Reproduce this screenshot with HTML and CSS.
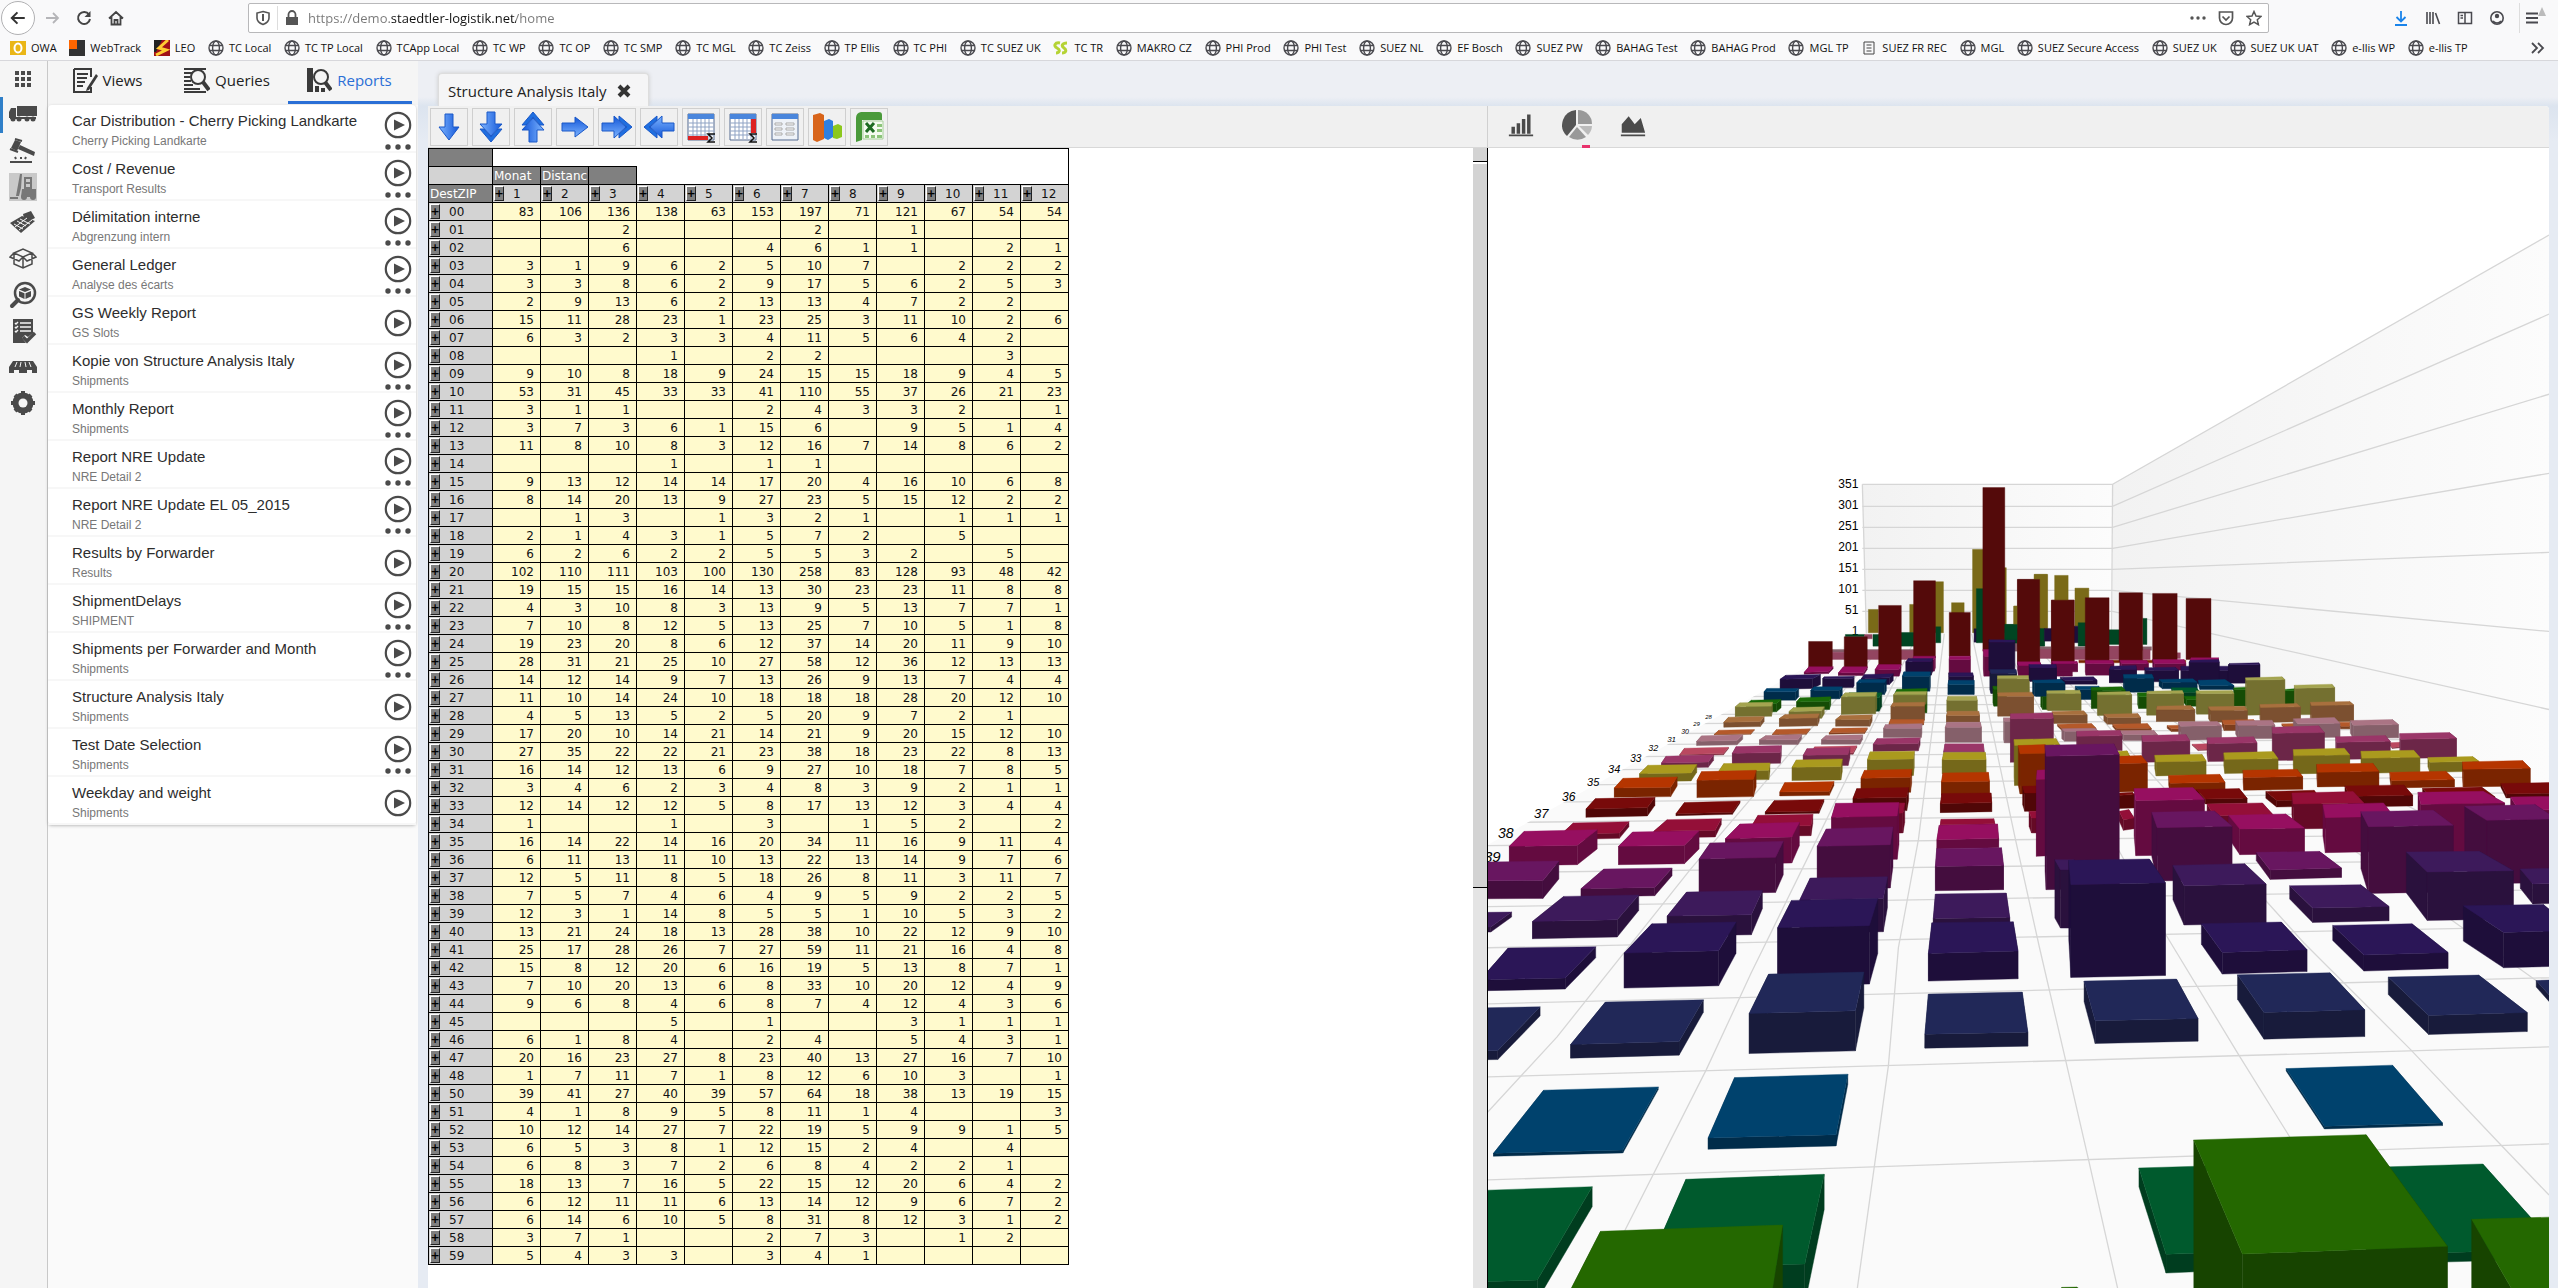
FILE: index.html
```html
<!DOCTYPE html>
<html lang="en">
<head>
<meta charset="utf-8">
<title>Structure Analysis Italy</title>
<link rel="stylesheet" href="styles.css">
</head>
<body>
<svg class="defs" aria-hidden="true">
  <symbol id="globe" viewBox="0 0 16 16"><g fill="none" stroke="#4a4a4f" stroke-width="1.4"><circle cx="8" cy="8" r="7"/><ellipse cx="8" cy="8" rx="3.4" ry="7"/><path d="M1.5 5.5h13M1.5 10.5h13"/></g></symbol>
  <symbol id="play" viewBox="0 0 28 28"><circle cx="14" cy="14" r="12.2" fill="none" stroke="#4a4a4a" stroke-width="2.2"/><path d="M10 8.5 21 14 10 19.500z" fill="#4a4a4a"/></symbol>
  <symbol id="arrow" viewBox="0 0 32 32"><path d="M12 3h8v13h6L16 29 6 16h6z" fill="url(#blue)" stroke="#1a58c8"/></symbol>
  <symbol id="arrow2" viewBox="0 0 32 32"><path d="M12 1h8v12h7L16 25 5 13h7z" fill="url(#blue)" stroke="#1a58c8"/><path d="M5 18h4l7 8 7-8h4L16 31z" fill="#1f6fe0" stroke="#1a58c8"/></symbol>
  <symbol id="grid" viewBox="0 0 32 32"><path d="M3 3h26v26H3z" fill="#fff" stroke="#556a90"/><path d="M3 3h26v5H3z" fill="#4a86dc"/><path d="M3.500 12h25M3.500 16h25M3.500 20h25M3.500 24h25M8 8v20M12 8v20M16 8v20M20 8v20M24 8v20" stroke="#8fa3c4" fill="none"/></symbol>
  <linearGradient id="blue"><stop offset="0" stop-color="#7db4ff"/><stop offset="1" stop-color="#1256d8"/></linearGradient>
</svg>

<header class="browser">
  <div class="navbar">
    <button class="round" aria-label="Back"><svg viewBox="0 0 16 16"><path d="M14 8H2.500M7.500 3 2.500 8l5 5" fill="none" stroke="#333" stroke-width="1.8"/></svg></button>
    <button class="nav" aria-label="Forward"><svg viewBox="0 0 16 16"><path d="M2 8h12M9 3l5 5-5 5" fill="none" stroke="#b5b5b8" stroke-width="1.800"/></svg></button>
    <button class="nav" aria-label="Reload"><svg viewBox="0 0 16 16"><path d="M13 4.500A6 6 0 1 0 14 9" fill="none" stroke="#444" stroke-width="2"/><path d="M14.500 1v6h-6z" fill="#444"/></svg></button>
    <button class="nav" aria-label="Home"><svg viewBox="0 0 16 16"><path d="M1 8.500 8 2l7 6.500M3.500 7v7.500h9V7M6.500 14v-4h3v4" fill="none" stroke="#444" stroke-width="1.800"/></svg></button>
    <div class="urlbar">
      <svg viewBox="0 0 16 16"><path d="M8 1.500 14 3v5c0 3-2 5-6 6.500C4 13 2 11 2 8V3z" fill="none" stroke="#555" stroke-width="1.600"/><path d="M8 4v7" stroke="#555" stroke-width="2"/></svg>
      <span class="rule"></span>
      <svg viewBox="0 0 16 16"><path d="M2 7h12v8H2z" fill="#555"/><path d="M4.500 8V4.500a3.500 3.500 0 0 1 7 0V8" fill="none" stroke="#555" stroke-width="1.800"/></svg>
      <input class="url" type="text" aria-label="Address" value="https://demo.staedtler-logistik.net/home">
      <svg viewBox="0 0 16 16"><g fill="#555"><circle cx="2" cy="8" r="1.700"/><circle cx="8" cy="8" r="1.700"/><circle cx="14" cy="8" r="1.700"/></g></svg>
      <svg viewBox="0 0 16 16"><path d="M1.500 2h13v6a6.500 6.500 0 0 1-13 0zM4.500 6.500 8 10l3.500-3.500" fill="none" stroke="#555" stroke-width="1.700"/></svg>
      <svg viewBox="0 0 16 16"><path d="m8 1.500 2 4.500 5 .5-3.700 3.300 1.100 4.900L8 12.200l-4.400 2.500 1.100-4.900L1 6.500 6 6z" fill="none" stroke="#555" stroke-width="1.500"/></svg>
    </div>
    <div class="tools">
      <button class="nav" aria-label="Downloads"><svg viewBox="0 0 16 16"><path d="M8 1v10M3.500 7 8 11.500 12.500 7M2 15h12" fill="none" stroke="#1a84ea" stroke-width="1.800"/></svg></button>
      <button class="nav" aria-label="Library"><svg viewBox="0 0 16 16"><path d="M2 2v12M5 2v12M8 2v12M10.500 3l4 11" fill="none" stroke="#4a4a4f" stroke-width="1.600"/></svg></button>
      <button class="nav" aria-label="Sidebars"><svg viewBox="0 0 16 16"><path d="M1.500 2.500h13v11h-13zM8 2.500v11M3.500 5.500H6M3.500 8H6" fill="none" stroke="#4a4a4f" stroke-width="1.500"/></svg></button>
      <button class="nav" aria-label="Account"><svg viewBox="0 0 16 16"><circle cx="8" cy="8" r="6.200" fill="none" stroke="#4a4a4f" stroke-width="1.600"/><circle cx="8" cy="6" r="2.200" fill="#4a4a4f"/><path d="M4 11a5 5 0 0 0 8 0" fill="none" stroke="#4a4a4f" stroke-width="1.600"/></svg></button>
      <button class="nav menu" aria-label="Menu"><svg viewBox="0 0 20 16"><path d="M0 3.500h12M0 8h12M0 12.500h12" stroke="#4a4a4f" stroke-width="1.800"/><path d="m16-3 4 9h-8z" fill="#bbb"/></svg></button>
    </div>
  </div>
  <nav class="bookmarks">
    <div class="marks">
      <a href="#"><svg viewBox="0 0 16 16"><path d="M0 1h16v14H0z" fill="#eab616"/><ellipse cx="8" cy="8" rx="3.500" ry="4.500" fill="none" stroke="#fff" stroke-width="2"/></svg>OWA</a>
      <a href="#"><svg viewBox="0 0 16 16"><path d="M0 0h16v16H0z" fill="#333"/><path d="M0 0h8v9H0z" fill="#f60"/></svg>WebTrack</a>
      <a href="#"><svg viewBox="0 0 16 16"><path d="M0 0h16v16H0z" fill="#a01018"/><path d="M0 0h8L2 12H0z" fill="#222"/><path d="M14 0 5 8l7 2-10 5" stroke="#fc3" stroke-width="3" fill="none"/></svg>LEO</a>
      <a href="#"><svg><use href="#globe"/></svg>TC Local</a>
      <a href="#"><svg><use href="#globe"/></svg>TC TP Local</a>
      <a href="#"><svg><use href="#globe"/></svg>TCApp Local</a>
      <a href="#"><svg><use href="#globe"/></svg>TC WP</a>
      <a href="#"><svg><use href="#globe"/></svg>TC OP</a>
      <a href="#"><svg><use href="#globe"/></svg>TC SMP</a>
      <a href="#"><svg><use href="#globe"/></svg>TC MGL</a>
      <a href="#"><svg><use href="#globe"/></svg>TC Zeiss</a>
      <a href="#"><svg><use href="#globe"/></svg>TP Ellis</a>
      <a href="#"><svg><use href="#globe"/></svg>TC PHI</a>
      <a href="#"><svg><use href="#globe"/></svg>TC SUEZ UK</a>
      <a href="#"><svg viewBox="0 0 16 16"><path d="M7 3C2 2 0 6 4 8s2 5-1 5M14 3c-5 0-6 3-3 5s2 5-2 5" fill="none" stroke="#b5d334" stroke-width="3"/></svg>TC TR</a>
      <a href="#"><svg><use href="#globe"/></svg>MAKRO CZ</a>
      <a href="#"><svg><use href="#globe"/></svg>PHI Prod</a>
      <a href="#"><svg><use href="#globe"/></svg>PHI Test</a>
      <a href="#"><svg><use href="#globe"/></svg>SUEZ NL</a>
      <a href="#"><svg><use href="#globe"/></svg>EF Bosch</a>
      <a href="#"><svg><use href="#globe"/></svg>SUEZ PW</a>
      <a href="#"><svg><use href="#globe"/></svg>BAHAG Test</a>
      <a href="#"><svg><use href="#globe"/></svg>BAHAG Prod</a>
      <a href="#"><svg><use href="#globe"/></svg>MGL TP</a>
      <a href="#"><svg viewBox="0 0 16 16"><path d="M3 2h10v12H3zM5.500 5h5M5.500 8h5M5.500 11h5" fill="none" stroke="#444"/></svg>SUEZ FR REC</a>
      <a href="#"><svg><use href="#globe"/></svg>MGL</a>
      <a href="#"><svg><use href="#globe"/></svg>SUEZ Secure Access</a>
      <a href="#"><svg><use href="#globe"/></svg>SUEZ UK</a>
      <a href="#"><svg><use href="#globe"/></svg>SUEZ UK UAT</a>
      <a href="#"><svg><use href="#globe"/></svg>e-llis WP</a>
      <a href="#"><svg><use href="#globe"/></svg>e-llis TP</a>
    </div>
    <button class="nav" aria-label="More bookmarks"><svg viewBox="0 0 16 16"><path d="m2 3 5 5-5 5M8 3l5 5-5 5" fill="none" stroke="#4a4a4f" stroke-width="1.800"/></svg></button>
  </nav>
</header>

<div class="app">
  <nav class="rail">
    <button aria-label="Apps"><svg viewBox="0 0 28 28"><path d="M6 6h4v4H6zm6 0h4v4h-4zm6 0h4v4h-4zM6 12h4v4H6zm6 0h4v4h-4zm6 0h4v4h-4zM6 18h4v4H6zm6 0h4v4h-4zm6 0h4v4h-4z"/></svg></button>
    <button class="current" aria-label="Transport"><svg viewBox="0 0 28 28"><path d="M8 5h20v10H8zM0 11l2-4h5v10H0zM1 16h26v2H1z"/><circle cx="4" cy="18" r="2.500"/><circle cx="10" cy="18" r="2.500"/><circle cx="18" cy="18" r="2.500"/><circle cx="24" cy="18" r="2.500"/></svg></button>
    <button aria-label="Tenders"><svg viewBox="0 0 28 28"><path d="m6 3 6 2-4 9-6-3zM11 8l15 7-1 4L9 12z"/><path d="M6 2l7 2M1 12l8 3M1 25h22M6 20l1 2M12 20v2M17 20l-1 2" stroke="#4a4a4a" stroke-width="2"/></svg></button>
    <button class="faded" aria-label="Warehouse"><svg viewBox="0 0 28 28"><path d="M11 1h2l-1 14-2 8H7zM15 4h8v12h4v8H12l1-8h2z"/><path d="M17 6h4v3h-4zM17 11h4v3h-4z" fill="#c9c9c9"/><circle cx="15" cy="24" r="3"/><circle cx="24" cy="24" r="3"/><path d="M1 25h8" stroke="#777" stroke-width="2"/></svg></button>
    <button aria-label="Costs"><svg viewBox="0 0 28 28"><path d="M14 5 22 2l4 7-10 5z"/><path d="m1 14 12-7 13 5-14 12z"/><path d="m5 15 9 5M8 12l9 5M11 10l10 5M6 18l12-9M10 21l13-10" stroke="#f5f5f5"/></svg></button>
    <button aria-label="Packages"><svg viewBox="0 0 28 28"><path d="m5 8 9-4 9 4-9 4zM5 8v11l9 4 9-4V8M14 12v11M5 8l-4 4 9 4 4-4 4 4 9-4-4-4" fill="none" stroke="#4a4a4a" stroke-width="1.500"/></svg></button>
    <button aria-label="Tracking"><svg viewBox="0 0 28 28"><circle cx="16" cy="12" r="10" fill="none" stroke="#4a4a4a" stroke-width="2.500"/><path d="m16 6 6 2.500-6 2.500-6-2.500zM10 10l5.500 2.300V18L10 15.500zM22 10l-5.500 2.300V18l5.500-2.500z"/><path d="m9 19-6 6" stroke="#4a4a4a" stroke-width="4" stroke-linecap="round"/></svg></button>
    <button aria-label="Checklists"><svg viewBox="0 0 28 28"><path d="M4 2h20v14l-5 4-3-2-3 3 4 5H4z"/><path d="M11 6h11M11 10h11M11 14h11M6 6l1 1 2-2M6 10l1 1 2-2M6 14l1 1 2-2" stroke="#f5f5f5" fill="none" stroke-width="1.500"/><path d="m14 20 4 4 8-8" fill="none" stroke="#4a4a4a" stroke-width="3.500"/></svg></button>
    <button aria-label="Stock"><svg viewBox="0 0 28 28"><path d="M4 8h20l4 6v6h-5v-3h-5v3h-8v-3H5v3H0v-6z"/><path d="m8 9-2 5M12 9l-1 5M16 9l1 5M20 9l2 5" stroke="#f5f5f5"/></svg></button>
    <button aria-label="Settings"><svg viewBox="0 0 28 28"><circle cx="14" cy="14" r="7.500" fill="none" stroke="#4a4a4a" stroke-width="6"/><path d="M14 2v24M2 14h24M6 6l16 16M22 6 6 22" stroke="#4a4a4a" stroke-width="4"/><circle cx="14" cy="14" r="4.500" fill="#f5f5f5"/></svg></button>
  </nav>

  <aside class="panel">
    <div class="tabs">
      <button class="views"><svg viewBox="0 0 26 26"><path d="M2 2h17v8M19 20v5H2V2M5 7h11M5 11h10M5 15h8M5 19h6" fill="none" stroke="#3a3a3a" stroke-width="2"/><path d="M24 7 15 21l-1 3 3-1L26 9z" fill="#3a3a3a"/></svg>Views</button>
      <button class="queries"><svg viewBox="0 0 26 26"><path d="M0 2h22M0 6h8M0 10h6M0 14h7M0 18h9M0 22h16M0 25h22" stroke="#3a3a3a" stroke-width="2"/><circle cx="14" cy="10" r="7" fill="none" stroke="#3a3a3a" stroke-width="2"/><path d="m19 15 6 8" stroke="#3a3a3a" stroke-width="4"/></svg>Queries</button>
      <button class="reports selected"><svg viewBox="0 0 26 26"><path d="M1 1h6v24H1zM9 19h4v6H9zM15 21h4v4h-4z" fill="#3a3a3a"/><circle cx="15" cy="10" r="7" fill="#f5f5f5" stroke="#3a3a3a" stroke-width="2"/><path d="m19 15 6 8" stroke="#3a3a3a" stroke-width="4"/></svg>Reports</button>
    </div>
    <ul class="reports-list" id="reports"></ul>
  </aside>

  <main class="work">
    <div class="doc-tabs"><div class="doc-tab">Structure Analysis Italy<button aria-label="Close tab"><svg viewBox="0 0 14 14"><path d="m2 2 10 10M12 2 2 12" stroke="#333" stroke-width="4"/></svg></button></div></div>
    <div class="split">
      <section class="pivot">
        <div class="toolbar">
          <button aria-label="Expand down"><svg><use href="#arrow"/></svg></button>
          <button aria-label="Expand all down"><svg><use href="#arrow2"/></svg></button>
          <button aria-label="Collapse up"><svg class="up"><use href="#arrow2"/></svg></button>
          <button aria-label="Expand right"><svg class="right"><use href="#arrow"/></svg></button>
          <button aria-label="Expand all right"><svg class="right"><use href="#arrow2"/></svg></button>
          <button aria-label="Collapse left"><svg class="left"><use href="#arrow2"/></svg></button>
          <button aria-label="Column totals"><svg viewBox="0 0 32 32"><use href="#grid"/><path d="M3 25h20v4H3z" fill="#d22"/><path d="M30 23h-7l4 4-4 4h7" fill="none" stroke="#111" stroke-width="1.500"/></svg></button>
          <button aria-label="Row totals"><svg viewBox="0 0 32 32"><use href="#grid"/><path d="M24 8h5v14h-5z" fill="#d22"/><path d="M30 23h-7l4 4-4 4h7" fill="none" stroke="#111" stroke-width="1.500"/></svg></button>
          <button aria-label="Layout"><svg viewBox="0 0 32 32"><path d="M3 3h26v26H3z" fill="#eef2f8" stroke="#556a90"/><path d="M3 3h26v5H3z" fill="#4a86dc"/><path d="M6 12h7v2H6zm11 0h8v2h-8zM6 17h7v2H6zm11 0h8v2h-8zM6 22h7v2H6zm11 0h8v2h-8z" fill="#fff" stroke="#aaa"/></svg></button>
          <button aria-label="Chart"><svg viewBox="0 0 32 32"><path d="m2 4 7-2 4 2v24l-7 3-4-2z" fill="#d8641a"/><path d="m13 10 5-2 4 2v16l-5 3-4-2z" fill="#2f7fe0"/><path d="m22 15 5-2 4 2v11l-5 2-4-1z" fill="#8cc81e"/></svg></button>
          <button aria-label="Export to Excel"><svg viewBox="0 0 32 32"><path d="M8 1h18q3 0 3 3v5H9v20l-6 2V7q0-5 5-6z" fill="#4a9a3a"/><path d="M10 10h20v18H10z" fill="#f4fbf0" stroke="#a8d09c"/><path d="M24 13h5v3h-5zm0 5h5v3h-5zm-12 6h4v3h-4zm6 0h4v3h-4zm6 0h5v3h-5z" fill="#8cc47a"/><path d="m13 12 8 9M21 12l-8 9" stroke="#1d6b22" stroke-width="3"/></svg></button>
        </div>
        <div class="sheet">
          <table id="pivot">
            <thead>
              <tr class="blank"><th class="dark"></th><td colspan="12"></td></tr>
              <tr class="blank"><th></th><th class="dark">Monat</th><th class="dark">Distanc</th><th class="dark"></th><td colspan="9"></td></tr>
            </thead>
            <tbody></tbody>
          </table>
          <div class="scroll"><span class="cap"></span><span class="thumb"></span></div>
        </div>
      </section>
      <section class="graph">
        <div class="toolbar kinds">
          <button aria-label="Bar chart"><svg viewBox="0 0 30 30"><path d="M4 17h4v8H4zm6-4h4v12h-4zm6-5h4v17h-4zm6-5h4v22h-4zM1 26h28v2H1z" fill="#4a4a4a"/></svg></button>
          <button class="picked" aria-label="Pie chart"><svg viewBox="0 0 30 30"><path d="M14 15V0a15 15 0 0 0-9 26z" fill="#555"/><path d="M16 14V0a14 14 0 0 1 14 14z" fill="#999"/><path d="M17 16h13a14 14 0 0 1-4 9z" fill="#bbb"/><path d="m15 17 9 10a15 15 0 0 1-17 0z" fill="#999"/></svg></button>
          <button aria-label="Area chart"><svg viewBox="0 0 30 30"><path d="M2 24V14L10 5l7 9 7-7 5 17zM1 26h28v2H1z" fill="#4a4a4a"/></svg></button>
        </div>
        <svg class="scene" id="scene" viewBox="1488 149 1060 1139" preserveAspectRatio="xMinYMin slice" role="img" aria-label="3D bar chart of shipments"></svg>
      </section>
    </div>
  </main>
</div>
<script src="app.js"></script>
</body>
</html>
```
FILE: styles.css
```css
* { box-sizing: border-box; }
body { margin: 0; height: 100vh; display: flex; flex-direction: column; overflow: hidden; font-family: "Open Sans", sans-serif; color: #222; background: #edeff4; }
button { border: 0; padding: 0; background: none; font: inherit; color: inherit; display: flex; align-items: center; justify-content: center; }
svg { display: block; flex: none; }
.defs { position: absolute; width: 0; height: 0; }

.browser { background: #f9f9fa; border-bottom: 1px solid #d7d7db; height: 61px; flex: none; }
.navbar { display: flex; align-items: center; height: 36px; }
.nav { width: 32px; height: 30px; }
.nav svg { width: 16px; height: 16px; }
.round { width: 34px; height: 34px; margin: 0 1px; border: 1px solid #b1b1b3; border-radius: 50%; background: #fff; flex: none; }
.round svg { width: 18px; height: 18px; }
.urlbar { flex: 1; margin-left: 116px; height: 30px; border: 1px solid #b8b8ba; border-radius: 2px; background: #fff; display: flex; align-items: center; gap: 12px; padding: 0 6px; }
.urlbar svg { width: 16px; height: 16px; }
.rule { width: 1px; height: 24px; background: #ddd; margin: 0 -6px; }
.url { flex: 1; border: 0; outline: 0; padding: 0; height: 26px; margin-left: -4px; font: 13px "Open Sans", sans-serif; color: transparent; background: linear-gradient(90deg, #777 82px, #111 82px, #111 208px, #777 208px); -webkit-background-clip: text; background-clip: text; }
.tools { display: flex; margin-left: 116px; width: 173px; }
.menu { border-left: 1px solid #ddd; margin-left: 6px; }
.menu svg { width: 24px; overflow: visible; }
.bookmarks { display: flex; align-items: center; justify-content: space-between; height: 24px; padding: 0 4px 0 10px; }
.marks { display: flex; justify-content: space-between; flex: 1; margin-right: 54px; font-size: 11px; line-height: 16px; }
.marks a { display: flex; align-items: center; gap: 5px; color: #111; text-decoration: none; white-space: nowrap; }
.marks svg { width: 16px; height: 16px; }

.app { flex: 1; display: flex; min-height: 0; }
.rail { width: 48px; flex: none; background: #f5f5f5; border-right: 1px solid #c8c8c8; }
.rail button { width: 100%; height: 36px; padding-right: 4px; border-left: 3px solid transparent; }
.rail .current { border-color: #2f7fc8; }
.rail svg { width: 28px; height: 28px; fill: #4a4a4a; }
.rail .faded svg { background: #c9c9c9; fill: #777; }

.panel { width: 370px; flex: none; background: #fafafa; }
.tabs { height: 44px; display: grid; grid-template-columns: 120px 120px 124px; background: #f5f5f5; font-size: 15px; }
.tabs button { gap: 5px; height: 43px; padding: 4px 2px 10px 0; }
.tabs .selected { color: #2a6fd6; border-bottom: 3px solid #2a6fd6; padding-bottom: 7px; }
.tabs svg { width: 26px; height: 26px; }
.reports-list { list-style: none; margin: 0 2px 0 0; padding: 0; background: #fff; border-radius: 4px; box-shadow: 0 1px 3px #8888; font-family: "Liberation Sans", Arial, sans-serif; }
.reports-list li { height: 48px; display: flex; justify-content: space-between; padding: 0 4px 0 24px; border-bottom: 2px solid #f7f7f7; }
.reports-list h3 { margin: 7px 0 0; font-size: 15px; line-height: 18px; font-weight: 400; color: #2d2d2d; }
.reports-list p { margin: 3px 0 0; font-size: 12px; line-height: 16px; color: #777; }
.actions { width: 28px; display: flex; flex-direction: column; align-items: center; justify-content: center; gap: 5px; padding-top: 5px; }
.actions .more { padding: 0; height: 7px; }
.actions .more svg { width: 26px; height: 6px; }
.actions .play svg { width: 28px; height: 28px; }

.work { flex: 1; min-width: 0; display: flex; flex-direction: column; padding: 0 9px 0 10px; background: linear-gradient(#edeff4 36px, #dce4ef 45px, #e6ebf3 80px); }
.doc-tabs { height: 45px; padding: 12px 0 0 10px; flex: none; }
.doc-tab { width: 211px; height: 33px; border: 1px solid #ddd; border-bottom: 0; border-radius: 4px 4px 0 0; box-shadow: 0 0 4px #ccc; background: #f5f5f6; display: flex; align-items: center; gap: 10px; padding: 2px 0 0 9px; font-size: 15px; white-space: nowrap; }
.doc-tab svg { width: 14px; height: 14px; }
.split { flex: 1; min-height: 0; display: flex; background: #fff; border-radius: 0 4px 0 0; overflow: hidden; }
.pivot { flex: 1060 1 0; min-width: 0; display: flex; flex-direction: column; }
.graph { flex: 1061 1 0; min-width: 0; display: flex; flex-direction: column; }
.toolbar { height: 42px; flex: none; background: #f0f0f0; display: flex; align-items: center; gap: 4px; padding: 0 2px; border-bottom: 1px solid #d8d8d8; }
.pivot .toolbar { border-right: 1px solid #d0d0d0; }
.toolbar button { width: 38px; height: 38px; border: 1px solid #cfcfcf; }
.toolbar svg { width: 32px; height: 32px; }
.up { transform: rotate(180deg); }
.right { transform: rotate(-90deg); }
.left { transform: rotate(90deg); }
.kinds { padding-left: 14px; gap: 18px; }
.kinds button { border: 0; height: 42px; padding-bottom: 4px; }
.kinds svg { width: 30px; height: 30px; }
.kinds .picked { background: linear-gradient(#e8336d, #e8336d) 24px 39px / 8px 3px no-repeat; }
.kinds button:first-child svg, .kinds button:last-child svg { height: 26px; }

.sheet { flex: 1; min-height: 0; display: flex; justify-content: space-between; align-items: flex-start; overflow: hidden; }
table { border-collapse: collapse; table-layout: fixed; width: 641px; font: 12px/14px "DejaVu Sans", Verdana, sans-serif; color: #111; }
tr { height: 18px; }
th, td { border: 1px solid #000; padding: 0; height: 18px; font-weight: 400; white-space: nowrap; }
td { text-align: right; padding-right: 6px; background: #fffacd; }
th { text-align: left; background: #d3d3d3; width: 48px; }
th:first-child { width: 64px; }
th.dark { background: #808080; color: #fff; padding-left: 1px; }
.blank td { background: #fff; border-top-color: #fff; }
.blank:first-child td { border-top-color: #000; border-bottom: 0; }
.axis { display: flex; align-items: center; gap: 9px; padding-left: 1px; }
.axis button { width: 10px; height: 15px; border: 1px solid; border-color: #fff #222 #222 #fff; background: #808080; color: #000; font-weight: 700; font-size: 11px; line-height: 12px; }
.scroll { align-self: stretch; width: 15px; border-right: 1px solid #000; background: #e4e4e4; display: flex; flex-direction: column; gap: 2px; }
.cap { height: 14px; background: #d3d3d3; border-bottom: 1px solid #000; box-shadow: 0 2px #fff; }
.thumb { flex: 0 0 63.5%; background: #d3d3d3; border-bottom: 1px solid #000; }
.scene { flex: 1; min-height: 0; width: 100%; font-family: "Liberation Sans", Arial, sans-serif; }
```
FILE: app.js
```javascript
const reports = [
  ['Car Distribution - Cherry Picking Landkarte', 'Cherry Picking Landkarte', 1],
  ['Cost / Revenue', 'Transport Results', 1],
  ['Délimitation interne', 'Abgrenzung intern', 1],
  ['General Ledger', 'Analyse des écarts', 1],
  ['GS Weekly Report', 'GS Slots', 0],
  ['Kopie von Structure Analysis Italy', 'Shipments', 1],
  ['Monthly Report', 'Shipments', 1],
  ['Report NRE Update', 'NRE Detail 2', 1],
  ['Report NRE Update EL 05_2015', 'NRE Detail 2', 1],
  ['Results by Forwarder', 'Results', 0],
  ['ShipmentDelays', 'SHIPMENT', 1],
  ['Shipments per Forwarder and Month', 'Shipments', 1],
  ['Structure Analysis Italy', 'Shipments', 0],
  ['Test Date Selection', 'Shipments', 1],
  ['Weekday and weight', 'Shipments', 0]
];
const dots = '<button class="more" aria-label="More"><svg viewBox="0 0 26 6" fill="#4a4a4a"><circle cx="3" cy="3" r="2.700"/><circle cx="13" cy="3" r="2.700"/><circle cx="23" cy="3" r="2.700"/></svg></button>';
document.getElementById('reports').innerHTML = reports.map(([title, source, more]) =>
  `<li><div><h3>${title}</h3><p>${source}</p></div><div class="actions"><button class="play" aria-label="Run ${title}"><svg><use href="#play"/></svg></button>${more ? dots : ''}</div></li>`).join('');

/* zip area, then shipments for months 1 to 12; "-" is an empty cell */
const rows = `00 83 106 136 138 63 153 197 71 121 67 54 54
01 - - 2 - - - 2 - 1 - - -
02 - - 6 - - 4 6 1 1 - 2 1
03 3 1 9 6 2 5 10 7 - 2 2 2
04 3 3 8 6 2 9 17 5 6 2 5 3
05 2 9 13 6 2 13 13 4 7 2 2 -
06 15 11 28 23 1 23 25 3 11 10 2 6
07 6 3 2 3 3 4 11 5 6 4 2 -
08 - - - 1 - 2 2 - - - 3 -
09 9 10 8 18 9 24 15 15 18 9 4 5
10 53 31 45 33 33 41 110 55 37 26 21 23
11 3 1 1 - - 2 4 3 3 2 - 1
12 3 7 3 6 1 15 6 - 9 5 1 4
13 11 8 10 8 3 12 16 7 14 8 6 2
14 - - - 1 - 1 1 - - - - -
15 9 13 12 14 14 17 20 4 16 10 6 8
16 8 14 20 13 9 27 23 5 15 12 2 2
17 - 1 3 - 1 3 2 1 - 1 1 1
18 2 1 4 3 1 5 7 2 - 5 - -
19 6 2 6 2 2 5 5 3 2 - 5 -
20 102 110 111 103 100 130 258 83 128 93 48 42
21 19 15 15 16 14 13 30 23 23 11 8 8
22 4 3 10 8 3 13 9 5 13 7 7 1
23 7 10 8 12 5 13 25 7 10 5 1 8
24 19 23 20 8 6 12 37 14 20 11 9 10
25 28 31 21 25 10 27 58 12 36 12 13 13
26 14 12 14 9 7 13 26 9 13 7 4 4
27 11 10 14 24 10 18 18 18 28 20 12 10
28 4 5 13 5 2 5 20 9 7 2 1 -
29 17 20 10 14 21 14 21 9 20 15 12 10
30 27 35 22 22 21 23 38 18 23 22 8 13
31 16 14 12 13 6 9 27 10 18 7 8 5
32 3 4 6 2 3 4 8 3 9 2 1 1
33 12 14 12 12 5 8 17 13 12 3 4 4
34 1 - - 1 - 3 - 1 5 2 - 2
35 16 14 22 14 16 20 34 11 16 9 11 4
36 6 11 13 11 10 13 22 13 14 9 7 6
37 12 5 11 8 5 18 26 8 11 3 11 7
38 7 5 7 4 6 4 9 5 9 2 2 5
39 12 3 1 14 8 5 5 1 10 5 3 2
40 13 21 24 18 13 28 38 10 22 12 9 10
41 25 17 28 26 7 27 59 11 21 16 4 8
42 15 8 12 20 6 16 19 5 13 8 7 1
43 7 10 20 13 6 8 33 10 20 12 4 9
44 9 6 8 4 6 8 7 4 12 4 3 6
45 - - - 5 - 1 - - 3 1 1 1
46 6 1 8 4 - 2 4 - 5 4 3 1
47 20 16 23 27 8 23 40 13 27 16 7 10
48 1 7 11 7 1 8 12 6 10 3 - 1
50 39 41 27 40 39 57 64 18 38 13 19 15
51 4 1 8 9 5 8 11 1 4 - - 3
52 10 12 14 27 7 22 19 5 9 9 1 5
53 6 5 3 8 1 12 15 2 4 - 4 -
54 6 8 3 7 2 6 8 4 2 2 1 -
55 18 13 7 16 5 22 15 12 20 6 4 2
56 6 12 11 11 6 13 14 12 9 6 7 2
57 6 14 6 10 5 8 31 8 12 3 1 2
58 3 7 1 - - 2 7 3 - 1 2 -
59 5 4 3 3 - 3 4 1 - - - -`;
const axis = label => `<th><div class="axis"><button aria-label="Expand ${label}">+</button>${label}</div></th>`;
const months = Array.from({ length: 12 }, (_, i) => axis(i + 1)).join('');
document.querySelector('#pivot thead').insertAdjacentHTML('beforeend', `<tr><th class="dark">DestZIP</th>${months}</tr>`);
document.querySelector('#pivot tbody').innerHTML = rows.split('\n').map(line => {
  const [zip, ...cells] = line.split(' ');
  return `<tr>${axis(zip)}${cells.map(v => `<td>${v === '-' ? '' : v}</td>`).join('')}</tr>`;
}).join('');

/* 3D chart: each series has a top colour and a shaded side colour */
const tones = {
  G: ['#246800', '#174400'], E: ['#005a2d', '#003d1f'], B: ['#00426d', '#002c4a'], N: ['#212858', '#181b3b'],
  I: ['#2b1657', '#1e0e3a'], P: ['#3d1a5b', '#2a113d'], V: ['#681660', '#440d3e'], M: ['#960f60', '#640b40'],
  C: ['#940f38', '#650a26'], R: ['#780a0a', '#500707'], O: ['#b53500', '#7a2400'], Y: ['#aa9a1e', '#75681a'],
  K: ['#9a3668', '#6c2648'], S: ['#ba4860', '#7d3040'], T: ['#aa7484', '#85606a'], U: ['#b4592a', '#7d3e1e'],
  W: ['#a8703e', '#7c5030'], L: ['#a4a450', '#747030'], F: ['#1a6a08', '#154c05'], D: ['#6b0a10', '#540a0a'],
  Q: ['#7a6a18', '#7a6a18'], H: ['#004522', '#004522'], J: ['#934560', '#934560']
};

/* Blocks are "tone, left, top, right, bottom" for flat bars, or
   "tone, back-left, back-right, front-right, front-left, depth" for boxes.
   Each group has its own origin and units, ordered from far to near. */
const groups = [
{ origin: [1470, 460], unit: [2.613, 3], blocks: `Q 1040 450 1066 520
Q 1148 435 1160 520
Q 1213 367 1236 520
Q 1257 430 1290 470
Q 1312 270 1340 520
Q 1390 325 1400 520
Q 1420 440 1430 520
Q 1473 345 1508 510
H 980 525 1030 532
J 1030 525 1050 538
H 1052 525 1068 560
H 1120 519 1160 560
H 1215 502 1229 550
I 1316 508 1325 548
H 1322 388 1340 550
H 1395 495 1430 560
H 1487 507 1500 560
T 945 570 1160 578
J 945 578 980 600
J 1035 573 1070 600
J 1125 573 1160 600
T 1396 552 1430 575
D 884 546 946 627
D 977 532 1037 625
D 1067 438 1126 617
D 1158 364 1215 595
D 1251 459 1306 590
D 1339 85 1396 575
D 1429 360 1487 615
D 1518 422 1577 615
M 885 622 948 622 936 636 873 638 6
M 975 622 1037 622 1027 640 962 640 8
M 1066 615 1125 615 1120 630 1058 630 20
M 1158 590 1215 590 1212 600 1156 600 35
M 1252 590 1306 590 1306 600 1251 600 45
M 1340 570 1400 570 1404 590 1342 590 60
M 1430 610 1488 610 1492 620 1432 620 30
M 1518 610 1568 610 1572 620 1520 620 30
I 825 647 915 645 895 657 810 659 30
I 925 652 1003 650 1000 656 921 657 28
I 1030 645 1105 643 1095 655 1022 657 20
I 1145 597 1208 597 1204 607 1138 607 40
I 1250 640 1312 640 1314 650 1250 650 20
I 1355 541 1422 541 1422 548 1355 548 85
I 1460 617 1530 617 1530 625 1462 625 40
B 775 687 858 687 850 697 768 697 25
B 898 682 972 682 965 692 890 692 26
B 1018 660 1087 660 1082 670 1010 670 35
B 1133 637 1202 637 1200 650 1129 650 45
B 1250 662 1316 662 1316 675 1248 675 30
N 1357 630 1425 630 1427 642 1360 642 60
B 1475 660 1550 660 1553 670 1478 670 40
F 735 722 812 720 800 732 722 734 25
F 862 715 942 712 938 725 853 727 25
E 990 700 1075 700 1068 715 985 715 40
F 1115 689 1193 687 1192 700 1110 700 60
F 1365 680 1400 680 1400 690 1368 690 50
F 1490 700 1530 700 1530 710 1495 710 40
L 705 730 790 728 787 740 693 742 30
L 845 744 925 742 918 754 833 756 22
L 980 700 1062 698 1058 710 970 712 53
L 1113 697 1192 696 1190 706 1106 706 28
L 1248 710 1322 710 1324 722 1245 722 35
L 1377 649 1458 648 1460 658 1377 658 45
L 1508 693 1590 692 1595 703 1510 703 50
W 675 773 768 771 758 786 663 788 15
W 823 765 912 763 907 775 808 777 24
W 968 768 1050 766 1044 780 955 780 20
W 1105 730 1187 728 1186 740 1099 740 42
W 1247 755 1328 755 1330 768 1244 768 20
W 1378 700 1470 698 1471 710 1378 710 60
U 650 812 742 810 733 822 638 824 2
U 800 810 888 808 878 822 790 824 2
U 948 806 1037 805 1030 818 938 820 4
U 1098 780 1185 780 1184 792 1094 792 4
T 605 829 712 826 697 843 592 845 13
T 773 828 866 825 856 841 756 841 14
T 930 828 1025 826 1018 840 918 840 14
T 1085 795 1180 793 1178 806 1080 806 28
T 1245 788 1332 788 1335 803 1241 803 45
T 1393 775 1470 775 1470 785 1395 785 65
S 560 866 675 863 662 882 548 885 4
S 900 862 1010 859 1000 880 890 882 4
K 512 890 636 886 622 907 500 910 16
K 695 861 813 858 810 879 685 881 32
K 880 867 992 864 987 885 870 887 33
K 1063 837 1175 835 1170 852 1053 854 22
K 1240 853 1340 853 1342 875 1237 875 4
Y 465 917 592 915 577 940 443 942 24
Y 663 912 783 910 780 932 650 934 28
Y 852 901 972 898 968 921 841 923 40
Y 1045 877 1160 875 1157 898 1038 900 50
Y 1237 879 1345 878 1347 900 1233 900 42
O 400 956 541 952 524 983 377 985 28
O 605 936 747 932 740 959 593 962 52
O 822 969 950 966 938 995 809 997 12
O 1030 932 1153 929 1150 953 1021 956 45
O 1235 940 1353 938 1356 965 1231 967 40
R 328 1017 483 1013 463 1044 303 1048 25
R 560 1029 705 1024 685 1058 538 1062 6
R 795 1023 924 1020 911 1054 771 1057 7
R 1010 987 1145 984 1140 1013 1000 1016 40
R 1232 1002 1360 1000 1362 1029 1228 1032 27
C 270 1090 415 1086 390 1120 238 1124 16
C 515 1080 656 1077 640 1112 480 1115 20
C 752 1067 895 1064 890 1098 735 1100 30
C 1000 1033 1135 1030 1130 1060 990 1062 60
C 1230 1079 1367 1077 1370 1092 1228 1095 5
M 142 1115 332 1110 280 1157 103 1160 58
M 425 1117 598 1113 560 1157 388 1160 55
M 705 1093 860 1088 840 1132 667 1137 78
M 955 1031 1120 1029 1115 1069 944 1073 130
M 1225 1097 1377 1093 1380 1136 1219 1140 28` },
{ origin: [2000, 460], unit: [2.81, 3], blocks: `Q 95 345 131 505
Q 152 348 190 505
Q 209 386 248 500
Q 37 440 48 505
H 12 495 48 540
H 110 510 123 560
I 123 507 145 545
I 205 500 220 550
H 218 490 240 560
H 300 511 335 555
H 399 477 411 555
T 110 562 424 572
J 110 570 143 597
J 205 570 240 600
J 300 560 335 600
J 399 570 420 600
J 494 580 505 597
O 220 602 520 610
D 48 360 110 607
D 143 422 207 605
D 238 415 305 605
D 333 400 399 605
D 427 402 496 605
D 521 417 591 600
M 48 607 110 607 115 618 52 618 25
M 145 605 214 605 216 612 148 612 25
M 238 602 315 602 318 612 240 612 35
M 335 602 410 602 415 612 340 612 20
M 427 600 515 600 520 612 432 612 20
M 535 595 612 595 612 602 533 602 10
I 80 615 155 615 157 625 83 625 40
I 168 653 260 652 271 662 180 662 12
I 310 620 380 618 382 630 306 630 40
I 405 625 490 623 500 632 408 632 35
I 507 620 640 620 645 632 507 632 40
I 533 602 612 600 614 608 530 608 55
I 643 612 725 610 728 616 640 616 55
B 90 662 170 660 180 670 96 670 40
B 210 680 275 680 285 690 220 690 30
B 345 645 425 644 430 656 347 656 42
B 445 660 540 658 552 668 455 668 20
B 555 662 630 660 655 678 560 678 12
E 480 685 550 685 560 698 490 698 20
F 255 684 340 682 350 692 256 692 55
F 385 700 415 700 415 712 388 712 35
F 515 710 550 710 555 720 522 720 20
F 655 685 690 683 690 690 655 690 50
F 795 690 825 688 825 694 795 694 40
L 130 694 222 692 225 702 131 702 50
L 272 698 362 696 368 706 273 706 62
L 412 695 510 693 514 702 411 702 65
L 549 694 650 693 655 702 551 702 62
L 688 655 790 652 798 660 690 662 105
L 825 677 930 674 938 684 827 686 80
W 145 756 233 754 243 766 150 766 26
W 290 764 385 762 393 774 300 774 20
W 440 740 534 738 545 750 438 750 36
W 584 742 685 740 693 752 590 752 36
W 728 735 832 732 842 742 730 744 45
W 870 728 980 726 991 736 873 738 50
U 160 794 255 792 268 806 172 806 6
U 315 794 412 792 423 806 325 806 8
U 468 798 500 797 510 808 480 808 8
U 622 782 710 780 720 795 628 795 18
U 790 793 825 792 830 800 795 800 4
U 950 788 980 788 980 800 955 800 8
T 172 808 265 806 275 815 180 815 30
T 335 814 430 812 440 825 345 825 18
T 500 787 608 786 620 798 505 800 42
T 660 784 762 782 770 797 667 798 40
T 822 778 937 774 953 791 835 793 42
T 982 783 1100 780 1117 795 990 797 40
S 538 854 600 852 610 868 555 870 3
S 1090 850 1120 848 1120 862 1100 864 3
K 28 763 145 760 148 776 28 778 130
K 214 815 335 812 341 828 215 830 45
K 397 828 520 825 531 844 400 846 62
K 580 835 710 832 720 850 583 852 54
K 763 803 893 799 909 819 764 821 82
K 941 832 1080 828 1094 845 943 848 52
K 1121 822 1260 819 1280 836 1123 839 58
Y 38 840 155 837 165 855 40 858 120
Y 325 876 355 874 362 888 330 890 5
Y 433 887 565 884 577 904 437 907 42
Y 627 880 765 876 779 897 630 900 42
Y 822 870 965 866 980 886 824 889 54
Y 1012 875 1160 872 1177 893 1015 896 45
Y 1200 894 1325 891 1343 905 1205 908 30
O 50 858 125 855 130 881 55 883 120
O 333 890 395 888 412 910 333 912 85
O 472 948 615 944 630 968 476 971 30
O 681 932 832 929 848 951 683 954 38
O 888 914 1045 911 1062 935 890 938 44
O 1093 938 1250 935 1274 960 1097 963 22
O 1297 907 1465 903 1487 926 1299 929 53
R 62 980 130 978 135 1000 68 1000 55
R 333 1000 370 998 375 1005 333 1007 40
R 550 990 670 987 692 1016 575 1018 15
R 745 996 880 992 900 1020 775 1022 20
R 967 979 1132 976 1157 1007 980 1010 32
R 1185 986 1350 982 1388 1012 1210 1014 20
R 1405 972 1560 968 1580 1000 1420 1003 12
C 80 1055 120 1055 120 1075 87 1075 45
C 333 1055 360 1050 375 1075 345 1080 32
C 580 1033 735 1030 765 1065 600 1068 40
C 818 1000 990 996 1020 1030 822 1033 75
M 103 932 140 930 140 958 101 960 230
M 375 987 540 984 572 1020 380 1023 165
M 640 1067 800 1063 853 1105 672 1108 77
M 905 1035 1075 1030 1103 1070 912 1074 105
M 1172 998 1355 995 1415 1030 1180 1034 180
M 1432 1012 1560 1010 1570 1050 1455 1052 100
V 125 857 318 853 333 885 128 890 400
V 425 1058 600 1054 650 1100 440 1104 160
V 718 1178 895 1175 957 1225 757 1231 28
V 1012 1056 1215 1052 1271 1097 1033 1101 200
V 1303 1040 1500 1035 1560 1078 1365 1082 190` },
{ origin: [1470, 840], unit: [1.441, 3], blocks: `V -20 68 128 64 105 122 -30 124 54
V 193 88 291 85 266 143 160 147 25
V 346 10 451 5 440 53 330 58 105
V 513 -32 609 -38 605 15 500 20 130
V 672 27 765 24 768 77 670 80 73
P -40 220 60 217 30 262 -60 265 15
P 135 170 243 166 212 240 90 245 52
P 312 157 421 152 405 225 284 229 60
P 490 115 601 111 595 176 475 180 100
P 670 163 772 160 777 233 667 236 70
P 842 60 870 60 870 90 850 90 175
P 1012 77 1115 72 1146 133 1028 138 118
P 1180 138 1282 135 1323 200 1213 205 43
P 1348 37 1453 35 1502 93 1378 97 145
P 1512 88 1560 86 1580 130 1530 133 60
I 55 325 181 321 137 415 15 420 33
I 262 252 383 247 358 333 222 340 105
I 463 182 587 176 575 258 443 264 175
I 665 249 782 246 789 334 660 341 83
I 862 62 978 58 1001 129 865 135 278
I 1053 252 1168 247 1205 330 1083 338 65
I 1242 257 1356 252 1408 338 1287 346 48
I 1430 198 1545 194 1590 272 1488 278 106
N -10 505 101 501 40 632 -20 634 27
N 195 487 336 480 301 605 145 614 41
N 430 403 567 397 555 513 402 521 120
N 660 463 795 457 803 577 655 583 42
N 884 424 1017 418 1048 536 900 543 68
N 1105 405 1238 399 1288 510 1143 518 80
N 1322 412 1452 406 1522 518 1380 527 57
N 1535 422 1570 420 1590 470 1560 480 20
B 106 751 271 741 220 930 34 940 9
B 381 713 544 703 527 884 343 894 34
B 1175 686 1328 676 1400 849 1230 859 8
E -10 1053 176 1040 97 1320 -30 1328 60
E 311 1018 510 1003 482 1272 255 1285 120
E 963 984 1060 978 1060 1238 1002 1243 56
E 1300 982 1458 972 1568 1228 1400 1238 28
G 188 1174 450 1155 430 1420 125 1430 300
G 852 1342 873 1341 880 1350 850 1352 5
G 1042 900 1290 884 1407 1219 1112 1242 560
G 1442 1138 1560 1131 1640 1400 1520 1420 400` }
];

const shape = (points, fill) => `<polygon points="${points.map(p => p.map(n => n.toFixed(1)).join(',')).join(' ')}" fill="${fill}" stroke="${fill}" stroke-width=".4"/>`;
function block(line, { origin, unit }) {
  const [tone, ...n] = line.split(' ');
  const v = n.map(Number);
  const at = (x, y) => [origin[0] + x / unit[0], origin[1] + y / unit[1]];
  const [top, side] = tones[tone];
  if (v.length === 4) {
    const [x1, y1, x2, y2] = v;
    return shape([at(x1, y1), at(x2, y1), at(x2, y2), at(x1, y2)], side);
  }
  const [ax, ay, bx, by, cx, cy, dx, dy, drop] = v;
  const far = drop * Math.min(1, (bx - ax) / (cx - dx));
  return shape([at(ax, ay), at(ax, ay + far), at(dx, dy + drop), at(dx, dy)], side)
    + shape([at(bx, by), at(bx, by + far), at(cx, cy + drop), at(cx, cy)], side)
    + shape([at(dx, dy), at(cx, cy), at(cx, cy + drop), at(dx, dy + drop)], side)
    + shape([at(ax, ay), at(bx, by), at(cx, cy), at(dx, dy)], top);
}
const line = points => `<polyline points="${points}" fill="none" stroke="#d6d6d6" stroke-width="1.300"/>`;
const levels = [[485, 236], [507, 315], [528, 395], [549, 474], [570, 553], [591, 632], [612, 710]];
const wall = levels.map(([y, end]) => line(`1862,${y} 2112,${y} 2548,${end}`)).join('');
const lanes = ['1487,1113 1557,1037 1690,870 1893,633', '1600,1300 1625,1230 1706,1070 1751,973 1918,633', '1857,1288 1888,1066 1898,948 1918,840 1944,633',
  '2117,1288 2088,1160 2065,1060 2039,948 2015,840 1971,633', '2345,1288 2289,1137 2238,1055 2164,933 1997,633', '2548,1195 2500,1145 2410,1050 2303,943 2023,633',
  '2548,990 2049,633', '2548,880 2075,633'].map(line).join('');
const ranks = [[1180, 1144], [1077, 1047], [1004, 978], [948, 927], [907, 890], [873, 860], [846, 834], [823, 812], [803, 793], [786, 777], [771, 763], [758, 751], [746, 739], [735, 729], [725, 720], [716, 711], [707, 703], [698, 694], [690, 686]]
  .map(([a, b]) => line(`1488,${a} 2548,${b}`)).join('');
const scale = [351, 301, 251, 201, 151, 101, 51, 1].map((n, i) => `<text x="1858" y="${489 + i * 21}" text-anchor="end" font-size="12">${n}</text>`).join('');
const depth = [[39, 1484, 862, 15], [38, 1498, 838, 14], [37, 1534, 818, 13], [36, 1562, 801, 12], [35, 1587, 786, 11], [34, 1608, 773, 11], [33, 1630, 762, 10], [32, 1648, 751, 9], [31, 1667, 742, 8], [30, 1681, 734, 7], [29, 1693, 726, 6], [28, 1705, 719, 6]]
  .map(([n, x, y, size]) => `<text x="${x}" y="${y}" font-size="${size}" font-style="italic">${n}</text>`).join('');
document.getElementById('scene').innerHTML = `
  <defs><linearGradient id="wall"><stop offset="0" stop-color="#f2f2f2"/><stop offset="1" stop-color="#fcfcfc"/></linearGradient>
  <clipPath id="floor"><path d="M1866 634H2112L2548 789V1288H1488V845z"/></clipPath></defs>
  <path d="M1862 485H2112V634H1866z" fill="url(#wall)"/>
  <path d="M2112 486 2548 236V789L2112 634z" fill="url(#wall)"/>
  <path d="M1866 634H2112L2548 789V1288H1488V845z" fill="#fafafa"/>
  ${wall}${line('1862,485 1866,634')}${line('2112,485 2111,634')}
  <g clip-path="url(#floor)">${lanes}${ranks}</g>${scale}${depth}
  ${groups.map(g => g.blocks.split('\n').map(b => block(b, g)).join('')).join('')}`;
```
